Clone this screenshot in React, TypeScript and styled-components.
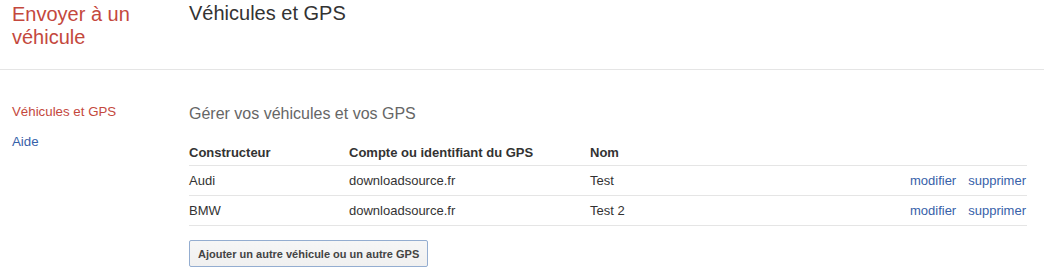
import React from 'react';
import styled, { createGlobalStyle } from 'styled-components';

interface Vehicle {
  maker: string;
  account: string;
  name: string;
}

const vehicles: Vehicle[] = [
  { maker: 'Audi', account: 'downloadsource.fr', name: 'Test' },
  { maker: 'BMW', account: 'downloadsource.fr', name: 'Test 2' },
];

const RED = '#c4483d';
const BLUE = '#3761a9';

const GlobalStyle = createGlobalStyle`
  html, body {
    margin: 0;
    padding: 0;
    background: #fff;
  }
  body {
    font-family: 'Liberation Sans', Arial, sans-serif;
    font-size: 13px;
    color: #333;
  }
`;

const Page = styled.div`
  width: 1044px;
`;

const Header = styled.header`
  display: flex;
  align-items: flex-start;
  height: 66px;
  padding-top: 3px;
  border-bottom: 1px solid #e5e5e5;
`;

const Side = styled.div`
  flex: 0 0 189px;
  box-sizing: border-box;
  padding: 0 17px 0 12px;
`;

const AppTitle = styled.h1`
  margin: 0;
  font-size: 20px;
  line-height: 23px;
  font-weight: normal;
  color: ${RED};
`;

const PageTitle = styled.h2`
  margin: -1px 0 0;
  font-size: 20px;
  line-height: 22px;
  font-weight: normal;
  color: #333;
`;

const Body = styled.div`
  display: flex;
  align-items: flex-start;
`;

const Nav = styled.nav`
  flex: 0 0 189px;
  box-sizing: border-box;
  padding: 27px 0 0 12px;
  display: flex;
  flex-direction: column;
`;

const NavItem = styled.a<{ $active?: boolean }>`
  font-size: 13.3px;
  line-height: 30px;
  color: ${p => (p.$active ? RED : BLUE)};
  text-decoration: none;
  cursor: pointer;
`;

const Main = styled.main`
  flex: 1;
  padding: 34px 17px 0 0;
`;

const Subtitle = styled.h3`
  margin: 0 0 21px;
  font-size: 16px;
  line-height: 20px;
  font-weight: normal;
  color: #666;
`;

const Row = styled.div<{ $head?: boolean }>`
  display: grid;
  grid-template-columns: 160px 241px 1fr auto;
  border-bottom: 1px solid #e5e5e5;
  line-height: ${p => (p.$head ? '15px' : '29px')};
  padding-bottom: ${p => (p.$head ? '5px' : '0')};
  font-weight: ${p => (p.$head ? 'bold' : 'normal')};
  font-size: 13px;
  color: #333;
`;

const Actions = styled.div`
  display: flex;
  gap: 12px;
  justify-content: flex-end;
  padding-right: 1px;
`;

const Link = styled.a`
  color: ${BLUE};
  text-decoration: none;
  cursor: pointer;
`;

const AddButton = styled.button`
  margin-top: 14px;
  height: 27px;
  padding: 0 8px;
  box-sizing: border-box;
  font-family: inherit;
  font-size: 11px;
  font-weight: bold;
  color: #444;
  background: linear-gradient(#f6f6f6, #f0f0f0);
  border: 1px solid #94add0;
  border-radius: 2px;
  cursor: pointer;
`;

export default function App() {
  return (
    <Page>
      <GlobalStyle />
      <Header>
        <Side>
          <AppTitle>Envoyer à un véhicule</AppTitle>
        </Side>
        <PageTitle>Véhicules et GPS</PageTitle>
      </Header>
      <Body>
        <Nav>
          <NavItem $active>Véhicules et GPS</NavItem>
          <NavItem>Aide</NavItem>
        </Nav>
        <Main>
          <Subtitle>Gérer vos véhicules et vos GPS</Subtitle>
          <Row $head>
            <div>Constructeur</div>
            <div>Compte ou identifiant du GPS</div>
            <div>Nom</div>
            <div />
          </Row>
          {vehicles.map(v => (
            <Row key={v.name}>
              <div>{v.maker}</div>
              <div>{v.account}</div>
              <div>{v.name}</div>
              <Actions>
                <Link>modifier</Link>
                <Link>supprimer</Link>
              </Actions>
            </Row>
          ))}
          <AddButton>Ajouter un autre véhicule ou un autre GPS</AddButton>
        </Main>
      </Body>
    </Page>
  );
}
